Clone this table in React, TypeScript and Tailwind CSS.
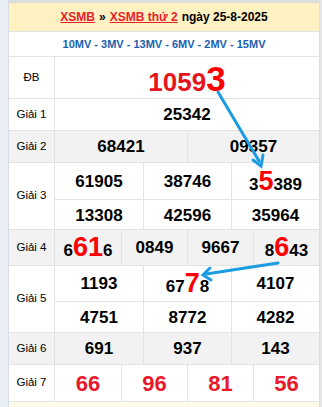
import React from 'react';

type Part = { t: string; big?: boolean };

const font = { fontFamily: '"Liberation Sans", Arial, sans-serif' };

// a number where some digits are highlighted big and red
const Num: React.FC<{ parts: Part[] }> = ({ parts }) => (
  <span className="font-bold text-[17px] text-black leading-none">
    {parts.map((p, i) =>
      p.big ? (
        <span key={i} className="text-[#ff0000] text-[27px]">
          {p.t}
        </span>
      ) : (
        <span key={i}>{p.t}</span>
      )
    )}
  </span>
);

const Cell: React.FC<{ children: React.ReactNode; first?: boolean }> = ({ children, first }) => (
  <div className={`flex items-center justify-center ${first ? '' : 'border-l border-[#e3e3e3]'}`}>
    {children}
  </div>
);

const Label: React.FC<{ text: string }> = ({ text }) => (
  <div className="w-[46px] flex-shrink-0 flex items-center justify-center border-r border-[#e3e3e3] text-[11.5px] text-black">
    {text}
  </div>
);

const plain = (s: string) => <Num parts={[{ t: s }]} />;

const App: React.FC = () => {
  return (
    <div className="relative w-[322px] h-[407px] flex bg-white overflow-hidden" style={font}>
      <div className="w-[8px] bg-[#e9eef6] border-r border-[#d9dee6] box-content" />
      <div className="w-[311px] flex flex-col border-r border-[#dedede]">
        <div className="h-[3px] bg-[#dddddd]" />
        <div className="h-[29px] bg-[#fff1c1] flex items-center justify-center text-[12px] font-bold border-b border-[#e3e3e3]">
          <span className="text-[#e8202a] underline">XSMB</span>
          <span className="text-black mx-[4px]">»</span>
          <span className="text-[#e8202a] underline">XSMB thứ 2</span>
          <span className="text-black ml-[4px]">ngày 25-8-2025</span>
        </div>
        <div className="h-[25px] flex items-center justify-center text-[11px] font-bold text-[#1a5fb0] border-b border-[#e3e3e3]">
          10MV - 3MV - 13MV - 6MV - 2MV - 15MV
        </div>

        {/* ĐB */}
        <div className="h-[42px] flex border-b border-[#e3e3e3]">
          <Label text="ĐB" />
          <div className="flex-1 flex items-center justify-center pt-[2px]">
            <span className="font-bold text-[#e8141d] leading-none">
              <span className="text-[26px]">1059</span>
              <span className="text-[#ff0000] text-[35px]">3</span>
            </span>
          </div>
        </div>

        {/* Giải 1 */}
        <div className="h-[32px] flex border-b border-[#e3e3e3]">
          <Label text="Giải 1" />
          <div className="flex-1 flex items-center justify-center">{plain('25342')}</div>
        </div>

        {/* Giải 2 */}
        <div className="h-[32px] flex border-b border-[#e3e3e3] bg-[#f2f2f2]">
          <Label text="Giải 2" />
          <div className="flex-1 grid grid-cols-2">
            <Cell first>{plain('68421')}</Cell>
            <Cell>{plain('09357')}</Cell>
          </div>
        </div>

        {/* Giải 3 */}
        <div className="h-[67px] flex border-b border-[#e3e3e3]">
          <Label text="Giải 3" />
          <div className="flex-1 grid grid-cols-3 grid-rows-[36px_31px]">
            <Cell first>{plain('61905')}</Cell>
            <Cell>{plain('38746')}</Cell>
            <Cell>
              <Num parts={[{ t: '3' }, { t: '5', big: true }, { t: '389' }]} />
            </Cell>
            <div className="col-span-3 grid grid-cols-3 border-t border-[#e3e3e3]">
              <Cell first>{plain('13308')}</Cell>
              <Cell>{plain('42596')}</Cell>
              <Cell>{plain('35964')}</Cell>
            </div>
          </div>
        </div>

        {/* Giải 4 */}
        <div className="h-[36px] flex border-b border-[#e3e3e3] bg-[#f2f2f2]">
          <Label text="Giải 4" />
          <div className="flex-1 grid grid-cols-4">
            <Cell first>
              <Num parts={[{ t: '6' }, { t: '61', big: true }, { t: '6' }]} />
            </Cell>
            <Cell>{plain('0849')}</Cell>
            <Cell>{plain('9667')}</Cell>
            <Cell>
              <Num parts={[{ t: '8' }, { t: '6', big: true }, { t: '43' }]} />
            </Cell>
          </div>
        </div>

        {/* Giải 5 */}
        <div className="h-[67px] flex border-b border-[#e3e3e3]">
          <Label text="Giải 5" />
          <div className="flex-1 grid grid-cols-3 grid-rows-[35px_32px]">
            <Cell first>{plain('1193')}</Cell>
            <Cell>
              <Num parts={[{ t: '67' }, { t: '7', big: true }, { t: '8' }]} />
            </Cell>
            <Cell>{plain('4107')}</Cell>
            <div className="col-span-3 grid grid-cols-3 border-t border-[#e3e3e3]">
              <Cell first>{plain('4751')}</Cell>
              <Cell>{plain('8772')}</Cell>
              <Cell>{plain('4282')}</Cell>
            </div>
          </div>
        </div>

        {/* Giải 6 */}
        <div className="h-[32px] flex border-b border-[#e3e3e3] bg-[#f2f2f2]">
          <Label text="Giải 6" />
          <div className="flex-1 grid grid-cols-3">
            <Cell first>{plain('691')}</Cell>
            <Cell>{plain('937')}</Cell>
            <Cell>{plain('143')}</Cell>
          </div>
        </div>

        {/* Giải 7 */}
        <div className="h-[37px] flex border-b border-[#e3e3e3]">
          <Label text="Giải 7" />
          <div className="flex-1 grid grid-cols-4 text-[22px] font-bold text-[#e8192a]">
            <Cell first>66</Cell>
            <Cell>96</Cell>
            <Cell>81</Cell>
            <Cell>56</Cell>
          </div>
        </div>
        <div className="flex-1 bg-[#fffbea]" />
      </div>
      <div className="flex-1 bg-[#e6e6e6]" />

      {/* arrows drawn over the table */}
      <svg className="absolute inset-0 pointer-events-none" width="322" height="407">
        <g stroke="#1b9ce2" strokeWidth="3" fill="none" strokeLinecap="round">
          <line x1="218" y1="92" x2="259" y2="161" />
          <polyline points="253,160 261,166 263,155" />
          <line x1="278" y1="263" x2="206" y2="274" />
          <polyline points="210,268 203,275 211,280" />
        </g>
      </svg>
    </div>
  );
};

export default App;
